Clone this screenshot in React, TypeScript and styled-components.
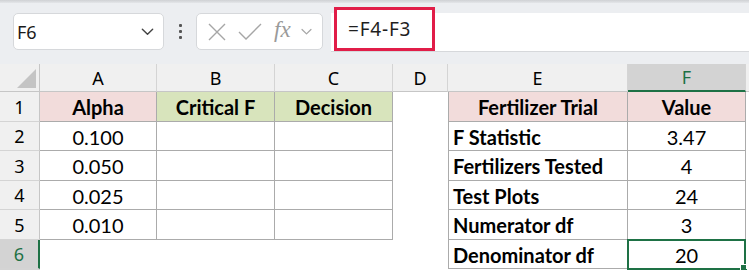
import React from "react";
import styled, { createGlobalStyle, css } from "styled-components";

const GlobalStyle = createGlobalStyle`
  body {
    margin: 0;
    background: #ffffff;
    font-family: "Noto Sans", "Liberation Sans", sans-serif;
  }
`;

const Frame = styled.div`
  width: 749px;
  height: 270px;
  overflow: hidden;
  background: #eceef1;
  display: flex;
  flex-direction: column;
`;

const TopEdge = styled.div`
  height: 3px;
  background: linear-gradient(#cfd1d4, #e4e6e9);
`;

const FormulaBar = styled.div`
  display: flex;
  align-items: flex-start;
  height: 58px;
  padding: 10px 0 0 13px;
  box-sizing: border-box;
`;

const NameBox = styled.div`
  width: 151px;
  height: 37px;
  box-sizing: border-box;
  background: #fff;
  border: 1px solid #d6d8db;
  border-radius: 5px;
  display: flex;
  align-items: center;
  justify-content: space-between;
  padding: 0 8px 0 3px;
  font-size: 18px;
  color: #1a1a1a;
`;

const Dots = styled.div`
  width: 32px;
  height: 37px;
  display: flex;
  flex-direction: column;
  align-items: center;
  justify-content: center;
  gap: 3px;
  span {
    width: 3px;
    height: 3px;
    background: #555;
    border-radius: 1px;
  }
`;

const FxBox = styled.div`
  width: 127px;
  height: 37px;
  box-sizing: border-box;
  background: #fff;
  border: 1px solid #d6d8db;
  border-radius: 5px;
  display: flex;
  align-items: center;
  padding: 0 0 0 9px;
  gap: 9px;
  color: #a6a6a6;
`;

const Fx = styled.span`
  font-family: "Liberation Serif", "DejaVu Serif", serif;
  font-style: italic;
  font-size: 23px;
  color: #9a9a9a;
  margin-left: 2px;
  margin-top: -3px;
`;

const FormulaInput = styled.div`
  flex: 1;
  margin-left: 8px;
  height: 38px;
  background: #fff;
  border-bottom: 1px solid #d6d8db;
  display: flex;
  align-items: center;
`;

const FormulaText = styled.div`
  margin-left: 3px;
  margin-top: -7px;
  height: 44px;
  width: 101px;
  box-sizing: border-box;
  border: 3px solid #e11d48;
  display: flex;
  align-items: center;
  padding-left: 11px;
  font-size: 19px;
  letter-spacing: 0.8px;
  color: #1f1f1f;
  background: #fff;
`;

const Sheet = styled.div`
  margin-top: 3px;
  flex: 1;
  display: grid;
  grid-template-columns: 40px 117px 118px 118px 55px 180px 118px 1fr;
  grid-template-rows: 28px 30px 29px 30px 29px 30px 29px 1fr;
  background: #fff;
`;

const ColHead = styled.div<{ $active?: boolean }>`
  background: #f0f0f0;
  border-right: 1px solid #d4d4d4;
  border-bottom: 1px solid #c6c6c6;
  box-sizing: border-box;
  display: flex;
  align-items: center;
  justify-content: center;
  font-size: 18px;
  color: #000;
  ${(p) =>
    p.$active &&
    css`
      background: #d3d3d3;
      color: #1e7145;
      border-bottom: 2px solid #1e7145;
    `}
`;

const Corner = styled.div`
  background: #f0f0f0;
  border-right: 1px solid #c6c6c6;
  border-bottom: 1px solid #c6c6c6;
  box-sizing: border-box;
  display: flex;
  align-items: flex-end;
  justify-content: flex-end;
  padding: 0 3px 3px 0;
`;

const RowHead = styled.div<{ $active?: boolean }>`
  background: #f0f0f0;
  border-right: 1px solid #c6c6c6;
  border-bottom: 1px solid #d4d4d4;
  box-sizing: border-box;
  display: flex;
  align-items: center;
  justify-content: center;
  font-size: 18px;
  color: #000;
  ${(p) =>
    p.$active &&
    css`
      background: #d3d3d3;
      color: #1e7145;
      border-right: 2px solid #1e7145;
    `}
`;

const Cell = styled.div<{
  $fill?: string;
  $bold?: boolean;
  $align?: "left" | "center";
  $boxed?: boolean;
  $left?: boolean;
  $selected?: boolean;
}>`
  position: relative;
  box-sizing: border-box;
  display: flex;
  align-items: center;
  justify-content: ${(p) => (p.$align === "left" ? "flex-start" : "center")};
  padding: 1px 4px 0;
  background: ${(p) => p.$fill || "#fff"};
  font-family: Lato, "Liberation Sans", sans-serif;
  font-size: 20px;
  font-weight: ${(p) => (p.$bold ? 700 : 400)};
  color: #000;
  white-space: nowrap;
  ${(p) =>
    p.$boxed &&
    css`
      border-right: 1px solid #ababab;
      border-bottom: 1px solid #ababab;
    `}
  ${(p) =>
    p.$left &&
    css`
      border-left: 1px solid #ababab;
    `}
  ${(p) =>
    p.$selected &&
    css`
      &::before {
        content: "";
        position: absolute;
        left: -1px;
        top: -1px;
        right: -1px;
        bottom: -2px;
        border: 2px solid #1e7145;
      }
      &::after {
        content: "";
        position: absolute;
        right: -3px;
        bottom: -4px;
        width: 6px;
        height: 6px;
        background: #1e7145;
        border: 1px solid #fff;
      }
    `}
`;

const PINK = "#f2dcdb";
const GREEN = "#d8e4bc";

const columns = ["A", "B", "C", "D", "E", "F"];

type Row = {
  a?: string;
  b?: string;
  c?: string;
  e?: string;
  f?: string;
};

const rows: Row[] = [
  { a: "Alpha", b: "Critical F", c: "Decision", e: "Fertilizer Trial", f: "Value" },
  { a: "0.100", e: "F Statistic", f: "3.47" },
  { a: "0.050", e: "Fertilizers Tested", f: "4" },
  { a: "0.025", e: "Test Plots", f: "24" },
  { a: "0.010", e: "Numerator df", f: "3" },
  { e: "Denominator df", f: "20" },
];

const Chevron = ({ size = 14, color = "#444" }: { size?: number; color?: string }) => (
  <svg width={size} height={size} viewBox="0 0 16 16" fill="none">
    <path d="M2.5 5.5 L8 11 L13.5 5.5" stroke={color} strokeWidth="1.5" strokeLinecap="round" strokeLinejoin="round" />
  </svg>
);

export default function App() {
  return (
    <>
      <GlobalStyle />
      <Frame>
        <TopEdge />
        <FormulaBar>
          <NameBox>
            <span>F6</span>
            <Chevron size={15} />
          </NameBox>
          <Dots>
            <span />
            <span />
            <span />
          </Dots>
          <FxBox>
            <svg width="22" height="22" viewBox="0 0 22 22">
              <path d="M3 3 L19 19 M19 3 L3 19" stroke="#a6a6a6" strokeWidth="1.4" />
            </svg>
            <svg width="26" height="22" viewBox="0 0 26 22">
              <path d="M2 11 L9 18 L24 3" stroke="#a6a6a6" strokeWidth="1.4" fill="none" />
            </svg>
            <Fx>fx</Fx>
            <Chevron size={13} color="#a6a6a6" />
          </FxBox>
          <FormulaInput>
            <FormulaText>=F4-F3</FormulaText>
          </FormulaInput>
        </FormulaBar>
        <Sheet>
          <Corner>
            <svg width="19" height="19" viewBox="0 0 19 19">
              <path d="M19 0 L19 19 L0 19 Z" fill="#c4c4c4" />
            </svg>
          </Corner>
          {columns.map((c) => (
            <ColHead key={c} $active={c === "F"}>
              {c}
            </ColHead>
          ))}
          <ColHead />
          {rows.map((r, i) => {
            const header = i === 0;
            const inLeft = i < 5;
            return (
              <React.Fragment key={i}>
                <RowHead $active={i === 5}>{i + 1}</RowHead>
                <Cell $boxed={inLeft} $fill={header ? PINK : undefined} $bold={header}>
                  {r.a}
                </Cell>
                <Cell $boxed={inLeft} $fill={header ? GREEN : undefined} $bold={header}>
                  {r.b}
                </Cell>
                <Cell $boxed={inLeft} $fill={header ? GREEN : undefined} $bold={header}>
                  {r.c}
                </Cell>
                <Cell />
                <Cell
                  $boxed
                  $left
                  $bold
                  $align={header ? "center" : "left"}
                  $fill={header ? PINK : undefined}
                >
                  {r.e}
                </Cell>
                <Cell $boxed $bold={header} $fill={header ? PINK : undefined} $selected={i === 5}>
                  {r.f}
                </Cell>
                <Cell />
              </React.Fragment>
            );
          })}
          <RowHead />
        </Sheet>
      </Frame>
    </>
  );
}
